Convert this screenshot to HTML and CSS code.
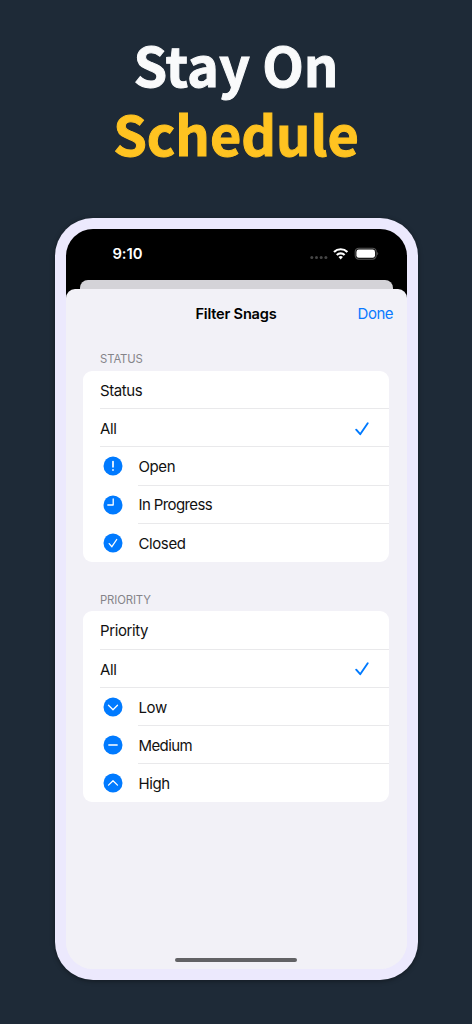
FILE: index.html
```html
<!DOCTYPE html>
<html lang="en">
<head>
<meta charset="utf-8">
<title>Stay On Schedule</title>
<link rel="stylesheet" href="styles.css">
</head>
<body>
<main class="poster">
  <h1 class="headline"><span class="line first">Stay On</span><span class="line accent">Schedule</span></h1>
  <div class="phone">
    <div class="screen">
      <header class="statusbar">
        <span class="time">9:10</span>
        <svg class="indicators" width="70" height="14" viewBox="0 0 70 14">
          <g fill="#454545"><circle cx="2.8" cy="10.5" r="1.5"/><circle cx="7.5" cy="10.5" r="1.5"/><circle cx="12.2" cy="10.5" r="1.5"/><circle cx="16.9" cy="10.5" r="1.5"/></g>
          <g fill="none" stroke="#fff" stroke-width="2.2"><path d="M25 5a9.5 9.5 0 0 1 13.4 0"/><path d="M27.8 8a5.5 5.5 0 0 1 7.8 0"/></g>
          <path d="M31.7 12.4l-2.2-2.3a3.1 3.1 0 0 1 4.4 0z" fill="#fff"/>
          <rect x="46.2" y="1.2" width="21" height="11" rx="3.6" fill="none" stroke="#555" stroke-width="1.1"/>
          <rect x="47.4" y="2.6" width="18.6" height="8.2" rx="2.3" fill="#fff"/>
          <path d="M68.3 5.1q1.8 1.6 0 3.2z" fill="#666"/>
        </svg>
      </header>
      <div class="backsheet"></div>
      <section class="sheet">
        <div class="navbar"><span></span><h2 class="title">Filter Snags</h2><span class="done">Done</span></div>
        <h3 class="label">STATUS</h3>
        <ul class="card">
          <li class="row"><div class="cell"><span class="text">Status</span></div></li>
          <li class="row"><div class="cell"><span class="text">All</span><svg class="check" width="14" height="14" viewBox="0 0 14 14"><path d="M1.2 7.7l4 4.5L12.7 1.3"/></svg></div></li>
          <li class="row"><svg class="icon" width="20" height="20" viewBox="0 0 20 20"><circle cx="10" cy="10" r="9.5"/><path class="bold" d="M10 5.6v5.2M10 13.8v.3"/></svg><div class="cell"><span class="text">Open</span></div></li>
          <li class="row"><svg class="icon" width="20" height="20" viewBox="0 0 20 20"><circle cx="10" cy="10" r="9.5"/><path d="M10.2 4v6H4.8"/></svg><div class="cell"><span class="text tight">In Progress</span></div></li>
          <li class="row"><svg class="icon" width="20" height="20" viewBox="0 0 20 20"><circle cx="10" cy="10" r="9.5"/><path d="M6.2 10.6l2.7 3.1 4.8-7.2"/></svg><div class="cell"><span class="text">Closed</span></div></li>
        </ul>
        <h3 class="label second">PRIORITY</h3>
        <ul class="card">
          <li class="row"><div class="cell"><span class="text">Priority</span></div></li>
          <li class="row"><div class="cell"><span class="text">All</span><svg class="check" width="14" height="14" viewBox="0 0 14 14"><path d="M1.2 7.7l4 4.5L12.7 1.3"/></svg></div></li>
          <li class="row"><svg class="icon" width="20" height="20" viewBox="0 0 20 20"><circle cx="10" cy="10" r="9.5"/><path d="M5.5 8.3l4.5 4.4 4.5-4.4"/></svg><div class="cell"><span class="text">Low</span></div></li>
          <li class="row"><svg class="icon" width="20" height="20" viewBox="0 0 20 20"><circle cx="10" cy="10" r="9.5"/><path d="M5.8 10h8.4"/></svg><div class="cell"><span class="text tight">Medium</span></div></li>
          <li class="row"><svg class="icon" width="20" height="20" viewBox="0 0 20 20"><circle cx="10" cy="10" r="9.5"/><path d="M5.5 12.1L10 7.7l4.5 4.4"/></svg><div class="cell"><span class="text">High</span></div></li>
        </ul>
        <div class="home"></div>
      </section>
    </div>
  </div>
</main>
</body>
</html>
```
FILE: styles.css
```css
* { box-sizing: border-box; margin: 0; padding: 0; }
body { background: #1e2a37; font-family: Inter, "Liberation Sans", sans-serif; }
.poster { height: 1024px; display: flex; flex-direction: column; align-items: center; overflow: hidden; }
.headline { height: 217.5px; padding-top: 29px; flex: none; font: 700 54px/69px "Noto Sans CJK SC", sans-serif; text-align: center; color: #f9fafb; -webkit-text-stroke: 1px currentColor; }
.line { display: block; }
.accent { color: #ffc321; }
.phone { width: 363px; height: 762.5px; flex: none; padding: 11px; border-radius: 38px; background: #ece9fd; box-shadow: 0 1px 5px rgba(0,0,0,.4); }
.screen { height: 740.5px; border-radius: 27px; background: linear-gradient(#000 50%, #f2f1f7 50%); overflow: hidden; display: flex; flex-direction: column; }
.statusbar { height: 51.5px; flex: none; padding: 0 28px 0 47px; display: flex; justify-content: space-between; align-items: center; color: #fff; }
.time { font-size: 14.8px; font-weight: 600; letter-spacing: -.1px; }
.backsheet { height: 9px; flex: none; margin: 0 14px; border-radius: 8px 8px 0 0; background: #d4d3d8; }
.sheet { flex: 1; border-radius: 9px 9px 0 0; background: #f2f1f7; padding: 0 17.5px; display: flex; flex-direction: column; }
.navbar { height: 49px; flex: none; margin: 0 -4px 0 -8px; padding-left: 4px; display: grid; grid-template-columns: 1fr auto 1fr; align-items: center; }
.title { font-size: 14.6px; font-weight: 600; letter-spacing: -.2px; }
.done { justify-self: end; color: #0a7aff; font-size: 15px; letter-spacing: -.5px; }
.label { height: 33px; padding: 14.4px 0 0 17px; font-size: 11.3px; line-height: 14px; font-weight: 400; color: #858489; letter-spacing: -.1px; }
.label.second { height: 49.5px; padding-top: 31px; }
.card { flex: none; list-style: none; background: #fff; border-radius: 9px; padding-left: 17px; }
.row { height: 38.2px; display: flex; }
.cell { flex: 1; display: flex; align-items: center; justify-content: space-between; padding: 1.6px 20px 0 0; border-bottom: 1px solid #e9e9eb; }
.row:last-child .cell { border-bottom: 0; padding-top: .8px; }
.text { font-size: 15px; color: #111; letter-spacing: -.4px; }
.tight { letter-spacing: -.6px; }
.icon { margin: 9px 15.9px 0 2.6px; flex: none; fill: #007aff; }
.icon path { fill: none; stroke: #fff; stroke-width: 1.3; stroke-linecap: round; stroke-linejoin: round; }
.icon .bold { stroke-width: 1.7; }
.check path { fill: none; stroke: #007aff; stroke-width: 1.9; stroke-linecap: round; stroke-linejoin: round; }
.home { width: 122px; height: 4.5px; border-radius: 3px; background: #626265; margin: auto auto 7px; }
```
